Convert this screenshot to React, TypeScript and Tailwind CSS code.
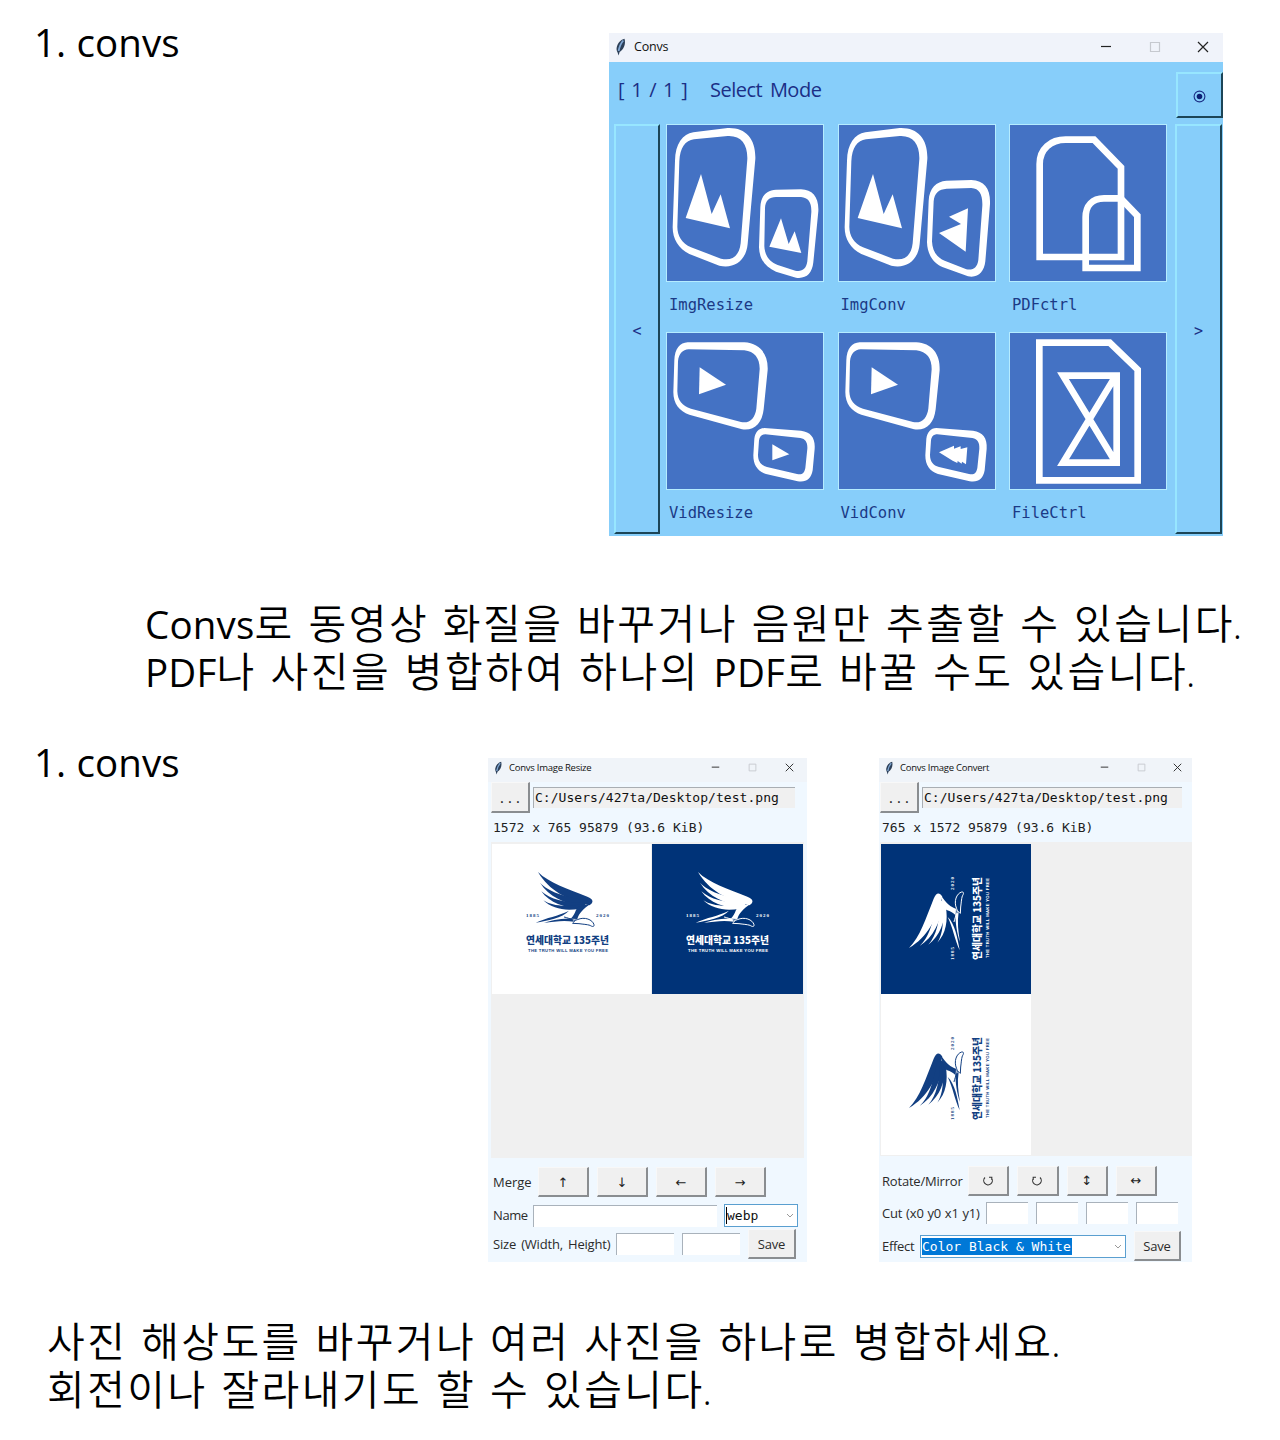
import type { ReactNode } from "react";

const ui = "font-['Open_Sans','Noto_Sans_CJK_KR',sans-serif]";
const mono = "font-['DejaVu_Sans_Mono',monospace]";
const raised =
  "shrink-0 flex items-center justify-center bg-[#f0f0f0] border-t border-l border-t-[#f8f8f8] border-l-[#f8f8f8] border-r-2 border-b-2 border-r-[#8a8d90] border-b-[#8a8d90]";
const sunken = "shrink-0 bg-white border-t border-l border-[#a9b2bb]";

function Feather({ className }: { className: string }) {
  return (
    <svg viewBox="0 0 12 18" className={className}>
      <path d="M9.500.8C6 1.600 2.400 5 1.600 10c-.2 1.600.2 3 .8 4L3.600 17.500l1-3.500C8.500 12 11.200 6 9.500.8Z" fill="#2c3f58" />
      <path d="M8.300 2.500C6 5 4.500 8.500 3.600 13" stroke="#7fa6d2" strokeWidth="1.800" fill="none" />
    </svg>
  );
}

function Minimize({ className }: { className: string }) {
  return (
    <svg viewBox="0 0 12 12" className={className}>
      <path d="M1 5.500h10" stroke="#222" strokeWidth="1.200" />
    </svg>
  );
}

function Maximize({ className }: { className: string }) {
  return (
    <svg viewBox="0 0 12 12" className={className}>
      <path d="M1.500 1.500h9v9h-9z" stroke="#c6c9cf" strokeWidth="1.200" fill="none" />
    </svg>
  );
}

function Close({ className }: { className: string }) {
  return (
    <svg viewBox="0 0 12 12" className={className}>
      <path d="M1 1l10 10M11 1L1 11" stroke="#222" strokeWidth="1.200" />
    </svg>
  );
}

const bigPicture = (
  <>
    <path
      fillRule="evenodd"
      d="M82 25L185 12C240 10 270 45 268 105L245 360C240 410 205 435 160 425L70 390C38 375 20 345 20 310L27 110C28 60 50 30 82 25ZM84 46C58 50 42 70 40 112L34 308C34 335 48 358 75 370L165 404C200 412 220 395 224 358L244 105C245 60 225 34 185 36Z"
    />
    <path d="M105 150L137 270L164 211L192 313L59 282Z" />
  </>
);

const bigVideo = (
  <>
    <path
      fillRule="evenodd"
      d="M65 31H235C280 33 307 65 305 114L293 232C288 275 265 297 228 292L70 248C40 238 22 215 22 180L25 85C26 50 42 32 65 31ZM68 52C50 53 38 65 36 88L34 178C35 205 48 222 75 230L225 270C252 275 267 258 271 230L281 112C282 80 266 58 235 55Z"
    />
    <path d="M101 106L180 158L99 187Z" />
  </>
);

const smallVideo = (
  <path
    fillRule="evenodd"
    d="M295 288L405 296C435 300 448 318 446 350L440 415C435 442 420 452 395 448L300 426C275 418 262 400 262 370L265 320C268 300 278 289 295 288ZM298 307C287 307 281 313 279 325L276 368C276 388 285 400 303 405L393 426C408 429 415 424 418 408L424 350C425 332 419 321 403 318Z"
  />
);

const modes: { name: string; art: ReactNode }[] = [
  {
    name: "ImgResize",
    art: (
      <>
        {bigPicture}
        <path
          fillRule="evenodd"
          d="M330 197L405 196C440 197 459 220 457 262L442 415C438 450 420 465 390 461L330 443C298 430 280 405 279 370L283 250C284 215 302 198 330 197ZM330 219C310 219 298 230 297 252L295 366C296 392 308 412 335 423L388 440C408 444 421 435 424 412L436 265C437 235 427 221 405 219Z"
        />
        <path d="M345 283L368 360L386 322L406 387L310 368Z" />
      </>
    ),
  },
  {
    name: "ImgConv",
    art: (
      <>
        {bigPicture}
        <path
          fillRule="evenodd"
          d="M325 170L400 168C440 170 458 195 456 240L442 412C438 445 420 463 390 457L315 430C285 418 268 390 267 355L272 230C274 192 295 172 325 170ZM326 194C302 196 289 207 287 232L282 352C283 380 295 400 320 410L385 436C406 440 418 430 421 408L433 245C434 212 425 194 400 192Z"
        />
        <path d="M390 253L333 278L369 300L303 327L383 383Z" />
      </>
    ),
  },
  {
    name: "PDFctrl",
    art: (
      <g fill="none" stroke="#fff" strokeWidth="20">
        <path d="M92 399V120C92 75 125 47 170 47H255L336 130V399Z" />
        <path d="M230 432V280C230 245 250 223 285 223H335L385 275V432Z" />
      </g>
    ),
  },
  {
    name: "VidResize",
    art: (
      <>
        {bigVideo}
        {smallVideo}
        <path d="M319 337L370 367L319 385Z" />
      </>
    ),
  },
  {
    name: "VidConv",
    art: (
      <>
        {bigVideo}
        {smallVideo}
        <path d="M303 361L348 341V350L368 343V351L388 346L384 397L372 389L371 395L359 387L358 393L344 386Z" />
      </>
    ),
  },
  {
    name: "FileCtrl",
    art: (
      <g fill="none" stroke="#fff" strokeWidth="20">
        <path d="M91 32H302L386 113V445H91Z" />
        <path d="M323 131H162L318 388M323 392H162L318 135M323 121V402" />
      </g>
    ),
  },
];

const blueRaised =
  "shrink-0 flex items-center justify-center border-t-2 border-l-2 border-t-[#97e6ff] border-l-[#97e6ff] border-r-2 border-b-2 border-r-[#1c4557] border-b-[#1c4557] text-[#1b2f86]";

function ModeWindow() {
  return (
    <div className="flex h-[503px] w-[614px] flex-col overflow-hidden bg-[#87cefa]">
      <div className="flex h-[29px] shrink-0 items-center bg-[#f0f3fa] pb-[2px] pl-[6px]">
        <Feather className="h-[18px] w-[12px]" />
        <span className={`${ui} ml-[7px] pt-px text-[12.500px] leading-none tracking-[-0.200px] text-[#111]`}>Convs</span>
        <div className="ml-auto flex items-center gap-[36.500px] pr-[14px]">
          <Minimize className="h-3 w-3" />
          <Maximize className="h-3 w-3" />
          <Close className="h-3 w-3" />
        </div>
      </div>
      <div className="flex h-[62px] shrink-0 items-start justify-between pl-[9px]">
        <div className={`${ui} flex pt-[17px] text-[20px] leading-[22px] text-[#1b2f86]`}>
          <span className="w-[92px] whitespace-pre tracking-[0.700px]">[ 1 / 1 ]</span>
          <span className="tracking-[-0.500px] [word-spacing:3px]">Select Mode</span>
        </div>
        <div className={`${blueRaised} mt-[10px] h-[46px] w-[47px]`}>
          <svg viewBox="0 0 14 14" className="mt-[3px] h-[13px] w-[13px]">
            <circle cx="7" cy="7" r="5.800" fill="none" stroke="#1b2f86" strokeWidth="1.200" />
            <circle cx="7" cy="7" r="3" fill="#0c1f74" />
          </svg>
        </div>
      </div>
      <div className="flex h-[412px] shrink-0 items-start pl-[5px]">
        <div className={`${blueRaised} ${mono} h-[410px] w-[46px] pt-[4px] text-[15px]`}>&lt;</div>
        <div className="ml-[6px] grid grid-cols-[158px_158px_158px] gap-x-[13.500px] pt-[0.400px]">
          {modes.map((m) => (
            <div key={m.name} className="h-[208px]">
              <div className="h-[158px] border border-[#b5ecff] bg-[#4472c4]">
                <svg viewBox="3 3 468 468" className="block h-full w-full" fill="#fff">
                  {m.art}
                </svg>
              </div>
              <div className={`${mono} pt-[13px] pl-[3px] text-[15.500px] leading-[20px] text-[#1b3a86]`}>{m.name}</div>
            </div>
          ))}
        </div>
        <div className={`${blueRaised} ${mono} ml-[8px] h-[410px] w-[47px] pt-[4px] text-[15px]`}>&gt;</div>
      </div>
    </div>
  );
}

function Emblem({ ink }: { ink: string }) {
  return (
    <>
      <g transform="translate(32 24) scale(.3333)" fill={ink}>
        <path d="M42 12C75 45 130 62 190 86C209 94 210 103 196 112C130 96 75 68 42 12Z" />
        <path d="M48 44C75 72 115 84 190 98L180 118C120 106 75 86 48 44Z" />
        <path d="M52 70C80 95 118 103 185 106L170 124C120 118 78 106 52 70Z" />
        <path d="M58 97C85 114 120 118 180 108L168 122C125 130 85 123 58 97Z" />
        <path d="M202 106C175 125 165 137 160 153L140 152C151 143 152 134 160 118Z" />
        <path d="M35 164C70 148 100 145 135 128C115 150 70 158 35 164Z" />
        <path d="M60 165C90 155 115 152 142 151L150 161C120 156 90 160 60 165Z" />
        <path
          fill="none"
          stroke={ink}
          strokeWidth="3"
          d="M120 147C140 151 148 160 160 155C182 145 206 155 210 170C211 178 204 176 198 172C188 169 178 169 165 167L145 166M155 155L148 164"
        />
      </g>
      <text x="34" y="73" fontSize="5" textLength="13" fill={ink} fontFamily="Liberation Serif" fontWeight="700">
        1885
      </text>
      <text x="104" y="73" fontSize="5" textLength="13" fill={ink} fontFamily="Liberation Serif" fontWeight="700">
        2020
      </text>
      <text x="34" y="100" fontSize="10" textLength="83" lengthAdjust="spacingAndGlyphs" fill={ink} fontFamily="Noto Sans CJK KR, sans-serif" fontWeight="900">
        연세대학교 135주년
      </text>
      <text x="36" y="107.500" fontSize="4.200" textLength="80" fill={ink} fontFamily="Liberation Sans" fontWeight="700">
        THE TRUTH WILL MAKE YOU FREE
      </text>
    </>
  );
}

function ToolTitle({ title, gap }: { title: string; gap: string }) {
  return (
    <div className="flex h-[24px] items-center bg-[#f0f4f9] pb-[5px] pl-[6px]">
      <Feather className="h-[14px] w-[9px]" />
      <span className={`${ui} ml-[6px] text-[9.500px] leading-none tracking-[-0.250px] text-[#111]`}>{title}</span>
      <div className={`ml-auto flex items-center ${gap}`}>
        <Minimize className="h-[9px] w-[9px]" />
        <Maximize className="h-[9px] w-[9px]" />
        <Close className="h-[9px] w-[9px]" />
      </div>
    </div>
  );
}

function FileRow({ field }: { field: string }) {
  return (
    <div className="flex">
      <div className={`${raised} ${mono} h-[31px] w-[39px] pt-1 text-[13px] tracking-[0.100px] text-[#333]`}>...</div>
      <div className={`${mono} ${field} mt-[5px] ml-[3px] h-[21px] border-t border-l border-[#a9aeb3] bg-[#f0f0f0] pl-px text-[13px] leading-[20px] tracking-[0.040px] whitespace-nowrap text-[#111]`}>
        C:/Users/427ta/Desktop/test.png
      </div>
    </div>
  );
}

const label = "text-[13px] leading-none whitespace-nowrap text-[#2b2b2b]";

function Chevron() {
  return (
    <svg viewBox="0 0 8 5" className="ml-auto h-[5px] w-[8px]">
      <path d="M1 1l3 3 3-3" fill="none" stroke="#999" strokeWidth="1" />
    </svg>
  );
}

function ResizeWindow() {
  return (
    <div className={`${ui} h-[504px] w-[319px] bg-[#f0f8ff]`}>
      <ToolTitle title="Convs Image Resize" gap="gap-[28px] pr-[13px]" />
      <div className="pl-[3px]">
        <FileRow field="w-[262px]" />
        <div className={`${mono} mt-[4px] pl-[2px] text-[13px] leading-[21px] text-[#222]`}>1572 x 765 95879 (93.6 KiB)</div>
        <div className="mt-[4px] h-[316px] w-[313px] bg-[#f0f0f0] pt-[2px] pl-px">
          <div className="flex gap-px">
            <svg viewBox="0 0 159 150" className="h-[150px] w-[159px] bg-white">
              <Emblem ink="#123f82" />
            </svg>
            <svg viewBox="0 0 151 150" className="h-[150px] w-[151px] bg-[#003378]">
              <Emblem ink="#fff" />
            </svg>
          </div>
        </div>
      </div>
      <div className="flex items-center pt-[9px] pl-[5px]">
        <span className={`${label} w-[45px]`}>Merge</span>
        <div className="flex gap-[8px] text-[13px] text-[#222]">
          {["↑", "↓", "←", "→"].map((a) => (
            <div key={a} className={`${raised} h-[30px] w-[51px] pt-[2px] font-['DejaVu_Sans']`}>{a}</div>
          ))}
        </div>
      </div>
      <div className="flex items-center pt-[7px] pl-[5px]">
        <span className={`${label} w-[40px] tracking-[-0.400px]`}>Name</span>
        <div className={`${sunken} h-[22px] w-[184px]`} />
        <div className={`${mono} ml-[7px] flex h-[23px] w-[74px] items-center border border-[#5a9fd0] bg-white pr-[3px] pl-px text-[13px] text-[#111]`}>
          <span className="border-l border-black leading-[17px]">webp</span>
          <Chevron />
        </div>
      </div>
      <div className="flex items-center pt-[2px] pl-[5px]">
        <span className={`${label} w-[123px] tracking-[-0.200px] [word-spacing:2px]`}>Size (Width, Height)</span>
        <div className={`${sunken} h-[22px] w-[58px]`} />
        <div className={`${sunken} ml-[8px] h-[22px] w-[58px]`} />
        <div className={`${raised} ml-[8px] h-[30px] w-[48px] pt-[2px] text-[13px] tracking-[-0.200px] text-[#2b2b2b]`}>Save</div>
      </div>
    </div>
  );
}

function RotateGlyph({ flip }: { flip?: boolean }) {
  return (
    <svg viewBox="0 0 12 12" className={flip ? "h-[12px] w-[12px] -scale-x-100" : "h-[12px] w-[12px]"}>
      <path d="M3 2.500A4.300 4.300 0 1 0 9.500 3M9.800 5V2.200H7" fill="none" stroke="#333" strokeWidth="1.100" />
    </svg>
  );
}

function ConvertWindow() {
  return (
    <div className={`${ui} h-[504px] w-[313px] bg-[#f0f8ff]`}>
      <ToolTitle title="Convs Image Convert" gap="gap-[27.500px] pr-[10px]" />
      <div className="pl-px">
        <FileRow field="w-[260px]" />
        <div className={`${mono} mt-[4px] pl-[2px] text-[13px] leading-[21px] text-[#222]`}>765 x 1572 95879 (93.6 KiB)</div>
        <div className="mt-[4px] h-[314px] bg-[#f0f0f0] pt-[2px] pl-px">
          <svg viewBox="0 0 150 150" className="block h-[150px] w-[150px] bg-[#003378]">
            <g transform="translate(0 150) rotate(-90)">
              <Emblem ink="#fff" />
            </g>
          </svg>
          <svg viewBox="0 0 150 161" className="block h-[161px] w-[150px] bg-white">
            <g transform="translate(0 160) rotate(-90)">
              <Emblem ink="#123f82" />
            </g>
          </svg>
        </div>
      </div>
      <div className="flex items-center pt-[10px] pl-[3px]">
        <span className={`${label} w-[86px] tracking-[-0.200px]`}>Rotate/Mirror</span>
        <div className="flex gap-[8px] text-[13px] text-[#222]">
          {[<RotateGlyph key="l" />, <RotateGlyph key="r" flip />, "↕", "↔"].map((a, i) => (
            <div key={i} className={`${raised} h-[30px] w-[41.300px] pt-px font-['DejaVu_Sans']`}>{a}</div>
          ))}
        </div>
      </div>
      <div className="flex items-center pt-[6px] pl-[3px]">
        <span className={`${label} w-[104px] tracking-[-0.150px] [word-spacing:0.500px]`}>Cut (x0 y0 x1 y1)</span>
        <div className="flex gap-[8px]">
          {[0, 1, 2, 3].map((n) => (
            <div key={n} className={`${sunken} h-[22px] w-[42px]`} />
          ))}
        </div>
      </div>
      <div className="flex items-center pt-[7px] pl-[3px]">
        <span className={`${label} w-[38px] tracking-[-0.300px]`}>Effect</span>
        <div className={`${mono} flex h-[23px] w-[206px] items-center border border-[#5a9fd0] bg-white pr-[3px] pl-px text-[13px]`}>
          <span className="w-[150px] bg-[#0078d7] leading-[17px] whitespace-nowrap text-white">Color Black &amp; White</span>
          <Chevron />
        </div>
        <div className={`${raised} ml-[8px] h-[30px] w-[47px] pt-[2px] text-[13px] tracking-[-0.200px] text-[#2b2b2b]`}>Save</div>
      </div>
    </div>
  );
}

function Heading() {
  return <h2 className="-ml-px w-[300px] text-[38.500px] leading-[48px] font-normal tracking-[0.100px] whitespace-nowrap">1. convs</h2>;
}

const copy = "text-[41px] whitespace-nowrap font-[350]";
const latin = "text-[38.500px] font-normal tracking-[0.200px]";

function Stop() {
  return <span className="-ml-[2.400px]">.</span>;
}

export default function App() {
  return (
    <main className={`${ui} h-[1440px] w-[1280px] overflow-hidden bg-white text-black`}>
      <section className="h-[720px]">
        <div className="flex justify-between pt-[33px] pr-[57px] pl-[35px]">
          <div className="-mt-[15px]">
            <Heading />
          </div>
          <ModeWindow />
        </div>
        <div className={`${copy} pt-[64px] pl-[145px] leading-[47px] tracking-[2.500px] [word-spacing:0.500px]`}>
          <p><span className={latin}>Convs</span>로 동영상 화질을 바꾸거나 음원만 추출할 수 있습니다<Stop /></p>
          <p><span className={latin}>PDF</span>나 사진을 병합하여 하나의 <span className={latin}>PDF</span>로 바꿀 수도 있습니다<Stop /></p>
        </div>
      </section>
      <section className="h-[720px]">
        <div className="flex pt-[38px] pl-[35px]">
          <div className="-mt-[20px] w-[453px] shrink-0">
            <Heading />
          </div>
          <ResizeWindow />
          <div className="ml-[72px]">
            <ConvertWindow />
          </div>
        </div>
        <div className={`${copy} pt-[56px] pl-[47px] leading-[47.500px] tracking-[2.420px] [word-spacing:0.800px]`}>
          <p>사진 해상도를 바꾸거나 여러 사진을 하나로 병합하세요<Stop /></p>
          <p>회전이나 잘라내기도 할 수 있습니다<Stop /></p>
        </div>
      </section>
    </main>
  );
}
